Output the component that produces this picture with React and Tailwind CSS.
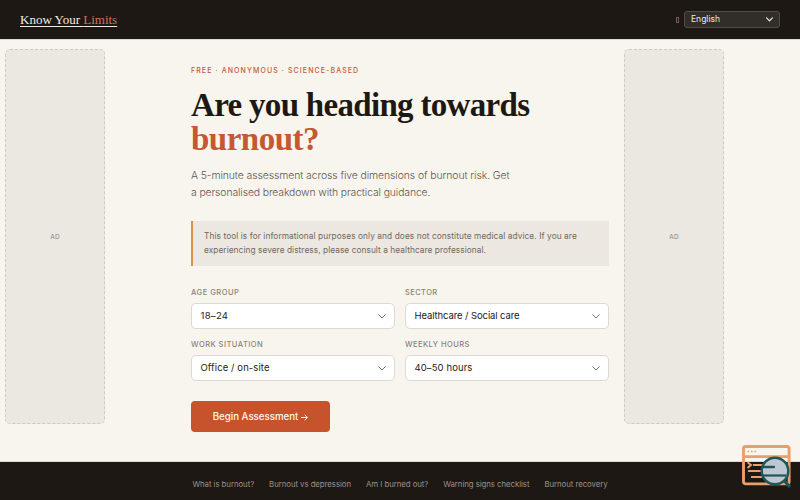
import React from 'react';

const FIELDS = [
    { id: 'age', label: 'Age group', value: '18–24', spacing: 'tracking-[0.3px]', labelSpacing: 'tracking-[0.5px]' },
    { id: 'sector', label: 'Sector', value: 'Healthcare / Social care', spacing: 'tracking-[-0.1px]', labelSpacing: 'tracking-[0.4px]' },
    { id: 'work', label: 'Work situation', value: 'Office / on-site', spacing: 'tracking-[0.1px]', labelSpacing: 'tracking-[0.48px]' },
    { id: 'hours', label: 'Weekly hours', value: '40–50 hours', spacing: 'tracking-[0.1px]', labelSpacing: 'tracking-[0.45px]' }
];

const FOOTER_LINKS = [
    'What is burnout?',
    'Burnout vs depression',
    'Am I burned out?',
    'Warning signs checklist',
    'Burnout recovery'
];

const Chevron = ({ className }) => (
    <svg className={className} viewBox="0 0 8 5" fill="none" stroke="currentColor">
        <path d="M0.7 0.7 4 4 7.3 0.7" strokeLinecap="round" strokeLinejoin="round" />
    </svg>
);

const AdSlot = ({ className = '' }) => (
    <aside className={`flex h-[375px] w-[100px] shrink-0 items-center justify-center rounded-[5px] border border-dashed border-[#cfcbc4] bg-[#ebe8e1] pt-[2px] text-[6.5px] tracking-[0.1px] text-[#8a847c] ${className}`}>
        AD
    </aside>
);

/**
 * Single labelled dropdown of the intake form.
 */
const Field = ({ id, label, value, spacing, labelSpacing }) => (
    <div>
        <div id={`${id}-label`} className={`h-[15px] text-[7.5px] leading-[9px] font-medium whitespace-nowrap text-[#8a837b] uppercase ${labelSpacing}`}>
            {label}
        </div>
        <button
            type="button"
            aria-labelledby={`${id}-label`}
            className="flex h-[26px] w-full items-center justify-between rounded-[5px] border border-[#ddd8d1] bg-white pr-2 pl-[8.5px] text-[#25211e]"
        >
            <span className={`text-[9.5px] whitespace-nowrap ${spacing}`}>{value}</span>
            <Chevron className="h-[5px] w-2 text-[#77716b]" />
        </button>
    </div>
);

/* Browser window with a magnifying glass over its lower right corner */
const InspectorBadge = () => (
    <svg className="fixed right-2 bottom-[11px] h-[45px] w-[50px]" viewBox="0 0 50 45" fill="none">
        <rect x="1.5" y="2.5" width="45.6" height="37.4" rx="2.2" stroke="#e8a06b" strokeWidth="2.9" />
        <path d="M2 12.6h45" stroke="#e8a06b" strokeWidth="2.6" />
        <path d="M5.5 7.5h1.6M9 7.5h1.6M12.5 7.5h1.6" stroke="#e8a06b" strokeWidth="1.5" />
        <path d="M5.5 18.3 9 21 5.5 24M11 21h14M6 27h17M9 33h12" stroke="#e8a06b" strokeWidth="2" />
        <path d="m42 36.5 6 6.5" stroke="#1d5759" strokeWidth="3.2" />
        <circle cx="33" cy="27" r="13.3" fill="#bdc8d2" stroke="#1d5759" strokeWidth="2.5" />
        <path d="M21 23h11" stroke="#1d5759" strokeWidth="2.3" strokeLinecap="round" />
        <path d="M21 31.5h23" stroke="#1d5759" strokeWidth="2.2" />
    </svg>
);

const App = () => {
    return (
        <div className="flex h-screen flex-col overflow-hidden bg-[#f8f5ee] font-['Inter',sans-serif] text-[#1d1814]">
            <header className="flex h-[39px] shrink-0 items-center justify-between bg-[#1d1813] pr-5 pl-5">
                <a href="#home" className="font-['Liberation_Serif',serif] text-[13px] leading-4 tracking-[0px] whitespace-nowrap text-[#f0ebe4] underline decoration-1 underline-offset-2">
                    Know Your <span className="text-[#d87054]">Limits</span>
                </a>
                <div className="flex items-center gap-[5px]">
                    <span className="h-[6px] w-[3px] border border-[#795b54]" />
                    <button type="button" className="flex h-[17px] w-24 items-center justify-between rounded-[3px] border border-[#514c48] bg-[#312d29] pr-[6px] pl-[6px] text-[8.5px] text-[#eeeae4]">
                        English
                        <Chevron className="h-[5px] w-[7px] stroke-[1.4]" />
                    </button>
                </div>
            </header>

            <div className="flex h-[423px] shrink-0 items-start border-y border-[#dedad2] pt-[9px] pl-[5px]">
                <AdSlot />
                <main className="ml-[86px] w-[418px] shrink-0 pt-[17px]">
                    <p className="h-[22px] text-[7px] leading-[10px] font-medium tracking-[1.1px] whitespace-nowrap text-[#c8573a] uppercase">
                        Free · Anonymous · Science-based
                    </p>
                    <h1 className="font-['Liberation_Serif',serif] text-[33px] leading-[34px] font-bold whitespace-nowrap">
                        <span className="block tracking-[-0.69px]">Are you heading towards</span>
                        <span className="block tracking-[-0.5px] text-[#c65831]">burnout?</span>
                    </h1>
                    <p className="mt-[11px] text-[10.4px] leading-[17px] font-light whitespace-nowrap text-[#5c554e]">
                        <span className="block tracking-[-0.08px]">A 5-minute assessment across five dimensions of burnout risk. Get</span>
                        <span className="block tracking-[-0.11px]">a personalised breakdown with practical guidance.</span>
                    </p>
                    <p className="mt-5 h-[45px] border-l-2 border-[#d69443] bg-[#ece7e0] pt-2 pl-[11px] text-[8.3px] leading-[14px] whitespace-nowrap text-[#71695f]">
                        <span className="block tracking-[0.085px]">This tool is for informational purposes only and does not constitute medical advice. If you are</span>
                        <span className="block tracking-[0.06px]">experiencing severe distress, please consult a healthcare professional.</span>
                    </p>
                    <div className="mt-[22px] grid grid-cols-2 gap-x-[10px] gap-y-[11px]">
                        {FIELDS.map((field) => (
                            <Field key={field.id} {...field} />
                        ))}
                    </div>
                    <button type="button" className="mt-5 flex h-[31px] w-[139px] items-center justify-center gap-[3px] rounded-[4px] bg-[#c6532c] pt-px text-[9.7px] font-medium whitespace-nowrap text-[#fff6ee]">
                        Begin Assessment
                        <svg className="h-[7px] w-[7px]" viewBox="0 0 7 7" fill="none" stroke="currentColor">
                            <path d="M0 3.5h6.3M3.7.7l2.7 2.8-2.7 2.8" />
                        </svg>
                    </button>
                </main>
                <AdSlot className="ml-[15px]" />
            </div>

            <footer className="flex flex-1 justify-center bg-[#1d1813] pt-[17px]">
                <nav className="flex gap-[15px] text-[7.8px] leading-[11px] whitespace-nowrap text-[#98928a]">
                    {FOOTER_LINKS.map((link) => (
                        <a key={link} href="#more" className="tracking-[-0.05px]">{link}</a>
                    ))}
                </nav>
            </footer>

            <InspectorBadge />
        </div>
    );
};

export default App;
